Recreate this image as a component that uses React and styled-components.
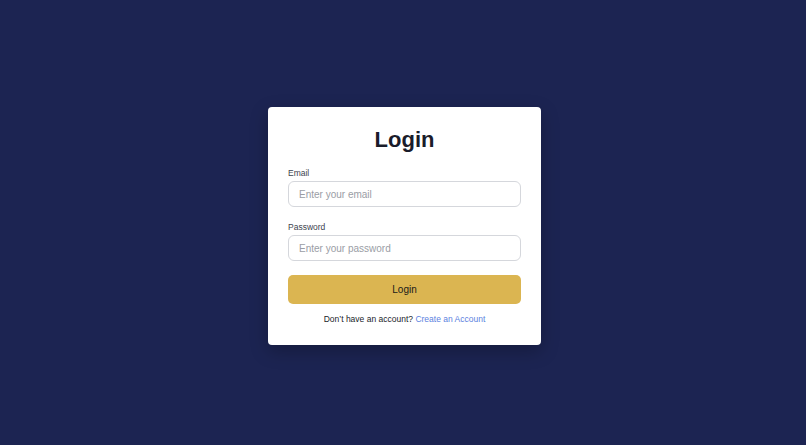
import React from "react";
import styled, { createGlobalStyle } from "styled-components";

const GlobalStyle = createGlobalStyle`
  html, body {
    margin: 0;
    padding: 0;
    background: #1c2452;
    font-family: "Liberation Sans", Arial, sans-serif;
  }
  * { box-sizing: border-box; }
`;

const Page = styled.div`
  width: 100%;
  height: 445px;
  display: flex;
  align-items: center;
  justify-content: center;
  padding-left: 3px;
  padding-top: 7px;
`;

const Card = styled.form`
  width: 273px;
  background: #ffffff;
  border-radius: 4px;
  padding: 20px 20px 21px;
  box-shadow: 0 6px 18px rgba(0, 0, 0, 0.25);
  display: flex;
  flex-direction: column;
`;

const Title = styled.h1`
  margin: 0 0 15px;
  font-size: 22px;
  font-weight: 700;
  color: #1a1c2a;
  text-align: center;
`;

const Field = styled.div`
  display: flex;
  flex-direction: column;
  gap: 3px;
  margin-bottom: ${(p) => p.$mb || 15}px;
`;

const Label = styled.label`
  font-size: 8.5px;
  color: #40434e;
`;

const Input = styled.input`
  height: 26px;
  width: 100%;
  border: 1px solid #d5d7dc;
  border-radius: 6px;
  padding: 0 10px;
  font-family: inherit;
  font-size: 10px;
  color: #222;
  outline: none;
  &::placeholder {
    color: #9a9da5;
  }
`;

const Button = styled.button`
  height: 29px;
  border: none;
  border-radius: 5px;
  background: #dbb551;
  color: #1a1a1a;
  font-family: inherit;
  font-size: 10px;
  cursor: pointer;
  margin-bottom: 10px;
`;

const Footer = styled.p`
  margin: 0;
  text-align: center;
  font-size: 8.5px;
  color: #1a1c2a;
`;

const Link = styled.a`
  color: #5b82e0;
  text-decoration: none;
`;

const App = () => {
  return (
    <>
      <GlobalStyle />
      <Page>
        <Card onSubmit={(e) => e.preventDefault()}>
          <Title>Login</Title>
          <Field>
            <Label>Email</Label>
            <Input type="email" placeholder="Enter your email" />
          </Field>
          <Field $mb={14}>
            <Label>Password</Label>
            <Input type="password" placeholder="Enter your password" />
          </Field>
          <Button type="submit">Login</Button>
          <Footer>
            Don’t have an account? <Link href="#">Create an Account</Link>
          </Footer>
        </Card>
      </Page>
    </>
  );
};

export default App;
